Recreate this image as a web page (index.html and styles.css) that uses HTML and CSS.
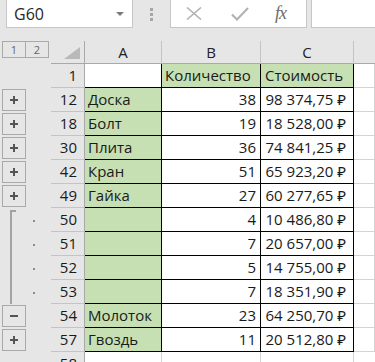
FILE: index.html
```html
<!DOCTYPE html>
<html lang="ru">
<head>
    <meta charset="UTF-8">
    <meta name="viewport" content="width=device-width, initial-scale=1.0">
    <title>Группировка строк</title>
    <link rel="stylesheet" href="styles.css">
</head>
<body>
    <div class="toolbar">
        <div class="namebox">
            <span>G60</span>
            <span class="arrow"></span>
        </div>
        <div class="grip"><i></i><i></i><i></i></div>
        <div class="fbuttons">
            <svg class="ico" width="16" height="13" viewBox="0 0 16 13">
                <path d="M1 0.5 L15 12.5 M15 0.5 L1 12.5" stroke="#b3b3b3" stroke-width="1.6" fill="none"/>
            </svg>
            <svg class="ico" width="18" height="14" viewBox="0 0 18 14">
                <path d="M1 7.5 L6 12.5 L17 1" stroke="#b3b3b3" stroke-width="2.2" fill="none"/>
            </svg>
            <span class="fx">fx</span>
        </div>
        <div class="formula"></div>
    </div>

    <div class="sheet">
        <div class="row head">
            <div class="outline">
                <span class="lvl">1</span><span class="lvl">2</span>
            </div>
            <div class="rh corner">
                <svg width="16" height="12" viewBox="0 0 16 12"><polygon points="16,0 16,12 0,12" fill="#b9b9b9"/></svg>
            </div>
            <div class="ch col-a">A</div>
            <div class="ch col-b">B</div>
            <div class="ch col-c">C</div>
            <div class="ch col-d"></div>
        </div>

        <div class="row">
            <div class="outline"></div>
            <div class="rh">1</div>
            <div class="cell col-a"></div>
            <div class="cell col-b green">Количество</div>
            <div class="cell col-c green">Стоимость</div>
            <div class="cell col-d"></div>
        </div>

        <div class="row">
            <div class="outline"><span class="obtn plus"></span></div>
            <div class="rh">12</div>
            <div class="cell col-a green">Доска</div>
            <div class="cell col-b num">38</div>
            <div class="cell col-c num">98 374,75 ₽</div>
            <div class="cell col-d"></div>
        </div>

        <div class="row">
            <div class="outline"><span class="obtn plus"></span></div>
            <div class="rh">18</div>
            <div class="cell col-a green">Болт</div>
            <div class="cell col-b num">19</div>
            <div class="cell col-c num">18 528,00 ₽</div>
            <div class="cell col-d"></div>
        </div>

        <div class="row">
            <div class="outline"><span class="obtn plus"></span></div>
            <div class="rh">30</div>
            <div class="cell col-a green">Плита</div>
            <div class="cell col-b num">36</div>
            <div class="cell col-c num">74 841,25 ₽</div>
            <div class="cell col-d"></div>
        </div>

        <div class="row">
            <div class="outline"><span class="obtn plus"></span></div>
            <div class="rh">42</div>
            <div class="cell col-a green">Кран</div>
            <div class="cell col-b num">51</div>
            <div class="cell col-c num">65 923,20 ₽</div>
            <div class="cell col-d"></div>
        </div>

        <div class="row">
            <div class="outline"><span class="obtn plus"></span></div>
            <div class="rh">49</div>
            <div class="cell col-a green">Гайка</div>
            <div class="cell col-b num">27</div>
            <div class="cell col-c num">60 277,65 ₽</div>
            <div class="cell col-d"></div>
        </div>

        <!-- expanded group 50-53 -->
        <div class="row">
            <div class="outline grp first"><span class="dot"></span></div>
            <div class="rh">50</div>
            <div class="cell col-a green"></div>
            <div class="cell col-b num">4</div>
            <div class="cell col-c num">10 486,80 ₽</div>
            <div class="cell col-d"></div>
        </div>

        <div class="row">
            <div class="outline grp"><span class="dot"></span></div>
            <div class="rh">51</div>
            <div class="cell col-a green"></div>
            <div class="cell col-b num">7</div>
            <div class="cell col-c num">20 657,00 ₽</div>
            <div class="cell col-d"></div>
        </div>

        <div class="row">
            <div class="outline grp"><span class="dot"></span></div>
            <div class="rh">52</div>
            <div class="cell col-a green"></div>
            <div class="cell col-b num">5</div>
            <div class="cell col-c num">14 755,00 ₽</div>
            <div class="cell col-d"></div>
        </div>

        <div class="row">
            <div class="outline grp"><span class="dot"></span></div>
            <div class="rh">53</div>
            <div class="cell col-a green"></div>
            <div class="cell col-b num">7</div>
            <div class="cell col-c num">18 351,90 ₽</div>
            <div class="cell col-d"></div>
        </div>

        <div class="row">
            <div class="outline"><span class="obtn minus"></span></div>
            <div class="rh">54</div>
            <div class="cell col-a green">Молоток</div>
            <div class="cell col-b num">23</div>
            <div class="cell col-c num">64 250,70 ₽</div>
            <div class="cell col-d"></div>
        </div>

        <div class="row">
            <div class="outline"><span class="obtn plus"></span></div>
            <div class="rh">57</div>
            <div class="cell col-a green">Гвоздь</div>
            <div class="cell col-b num">11</div>
            <div class="cell col-c num">20 512,80 ₽</div>
            <div class="cell col-d"></div>
        </div>

        <div class="row empty">
            <div class="outline"></div>
            <div class="rh">58</div>
            <div class="cell col-a"></div>
            <div class="cell col-b"></div>
            <div class="cell col-c"></div>
            <div class="cell col-d"></div>
        </div>
    </div>
</body>
</html>
```

FILE: styles.css
```css
* {
    box-sizing: border-box;
}
body {
    margin: 0;
    height: 362px;
    overflow: hidden;
    background-color: #e6e6e6;
    font-family: "Open Sans", "Noto Sans", sans-serif;
    color: #1a1a1a;
}

/* name box + formula bar */
.toolbar {
    display: flex;
    align-items: flex-start;
    height: 41px;
}
.namebox {
    display: flex;
    align-items: center;
    justify-content: space-between;
    width: 127px;
    height: 29px;
    margin: -1px 0 0 6px;
    padding: 0 8px 0 7px;
    background-color: #fff;
    border: 1px solid #c6c6c6;
    font-size: 16px;
    color: #262626;
}
.arrow {
    width: 0;
    height: 0;
    border-left: 4px solid transparent;
    border-right: 4px solid transparent;
    border-top: 4px solid #7a7a7a;
}
.grip {
    display: flex;
    flex-direction: column;
    gap: 2px;
    margin: 8px 0 0 17px;
}
.grip i {
    display: block;
    width: 3px;
    height: 3px;
    background-color: #a6a6a6;
}
.fbuttons {
    display: flex;
    align-items: center;
    width: 137px;
    height: 29px;
    margin: -1px 0 0 17px;
    padding-left: 15px;
    gap: 0;
    background-color: #fff;
    border: 1px solid #c6c6c6;
}
.fbuttons .ico {
    margin-right: 29px;
}
.fbuttons .ico + .ico {
    margin-right: 26px;
}
.fx {
    font-family: "Liberation Serif", serif;
    font-style: italic;
    font-size: 18px;
    color: #6b6b6b;
    letter-spacing: -1px;
}
.formula {
    flex: 1;
    height: 29px;
    margin: -1px 0 0 4px;
    background-color: #fff;
    border: 1px solid #c6c6c6;
    border-right: none;
}

/* grid */
.row {
    display: flex;
    height: 24px;
}
.row.head {
    height: 23px;
}
.outline {
    position: relative;
    width: 51px;
    flex: none;
}
.rh {
    width: 34px;
    flex: none;
    display: flex;
    align-items: flex-end;
    justify-content: flex-end;
    padding: 0 7px 1px 0;
    border-bottom: 1px solid #c4c4c4;
    border-right: 1px solid #a9a9a9;
    font-size: 15px;
    line-height: 22px;
}
.cell, .ch {
    flex: none;
    display: flex;
    align-items: flex-end;
    padding: 0 4px 1px 3px;
    font-size: 15px;
    line-height: 22px;
    white-space: nowrap;
    overflow: hidden;
}
.col-a { width: 77px; }
.col-b { width: 99px; }
.col-c { width: 93px; }
.col-d { flex: 1; }

.cell {
    background-color: #fff;
    border-right: 1px solid #000;
    border-bottom: 1px solid #000;
}
.cell.col-d, .empty .cell {
    border-right: 1px solid #d4d4d4;
    border-bottom: 1px solid #d4d4d4;
}
.empty .cell.col-d {
    border-right: none;
}
.cell.col-c {
    padding-left: 4px;
}
.green {
    background-color: #c6e0b4;
}
.num {
    justify-content: flex-end;
    padding-right: 4px;
}
.cell.col-c.num {
    padding-right: 7px;
}

/* column headers */
.head .rh {
    align-items: flex-end;
    padding: 0 4px 4px 0;
    border-bottom: 1px solid #a9a9a9;
}
.ch {
    justify-content: center;
    align-items: center;
    padding: 0;
    border-right: 1px solid #c4c4c4;
    border-bottom: 1px solid #a9a9a9;
    color: #222;
}
.ch.col-d {
    border-right: none;
}

/* outline buttons */
.lvl {
    display: inline-flex;
    align-items: center;
    justify-content: center;
    width: 24px;
    height: 17px;
    margin-left: 2px;
    border: 1px solid #a9a9a9;
    font-size: 11px;
    color: #666;
    vertical-align: top;
}
.lvl + .lvl {
    margin-left: -1px;
}
.obtn {
    position: relative;
    display: block;
    width: 24px;
    height: 22px;
    margin: 1px 0 0 2px;
    border: 1px solid #a9a9a9;
}
.obtn::before, .obtn.plus::after {
    content: "";
    position: absolute;
    left: 7px;
    top: 9px;
    width: 8px;
    height: 2px;
    background-color: #555;
}
.obtn.plus::after {
    left: 10px;
    top: 6px;
    width: 2px;
    height: 8px;
}

/* bracket of the expanded group */
.grp::before {
    content: "";
    position: absolute;
    left: 10px;
    top: 0;
    bottom: 0;
    width: 2px;
    background-color: #a3a3a3;
}
.grp.first::before {
    top: 2px;
}
.grp.first::after {
    content: "";
    position: absolute;
    left: 10px;
    top: 2px;
    width: 6px;
    height: 2px;
    background-color: #a3a3a3;
}
.dot {
    position: absolute;
    left: 33px;
    top: 12px;
    width: 2px;
    height: 2px;
    background-color: #8c8c8c;
}
```
